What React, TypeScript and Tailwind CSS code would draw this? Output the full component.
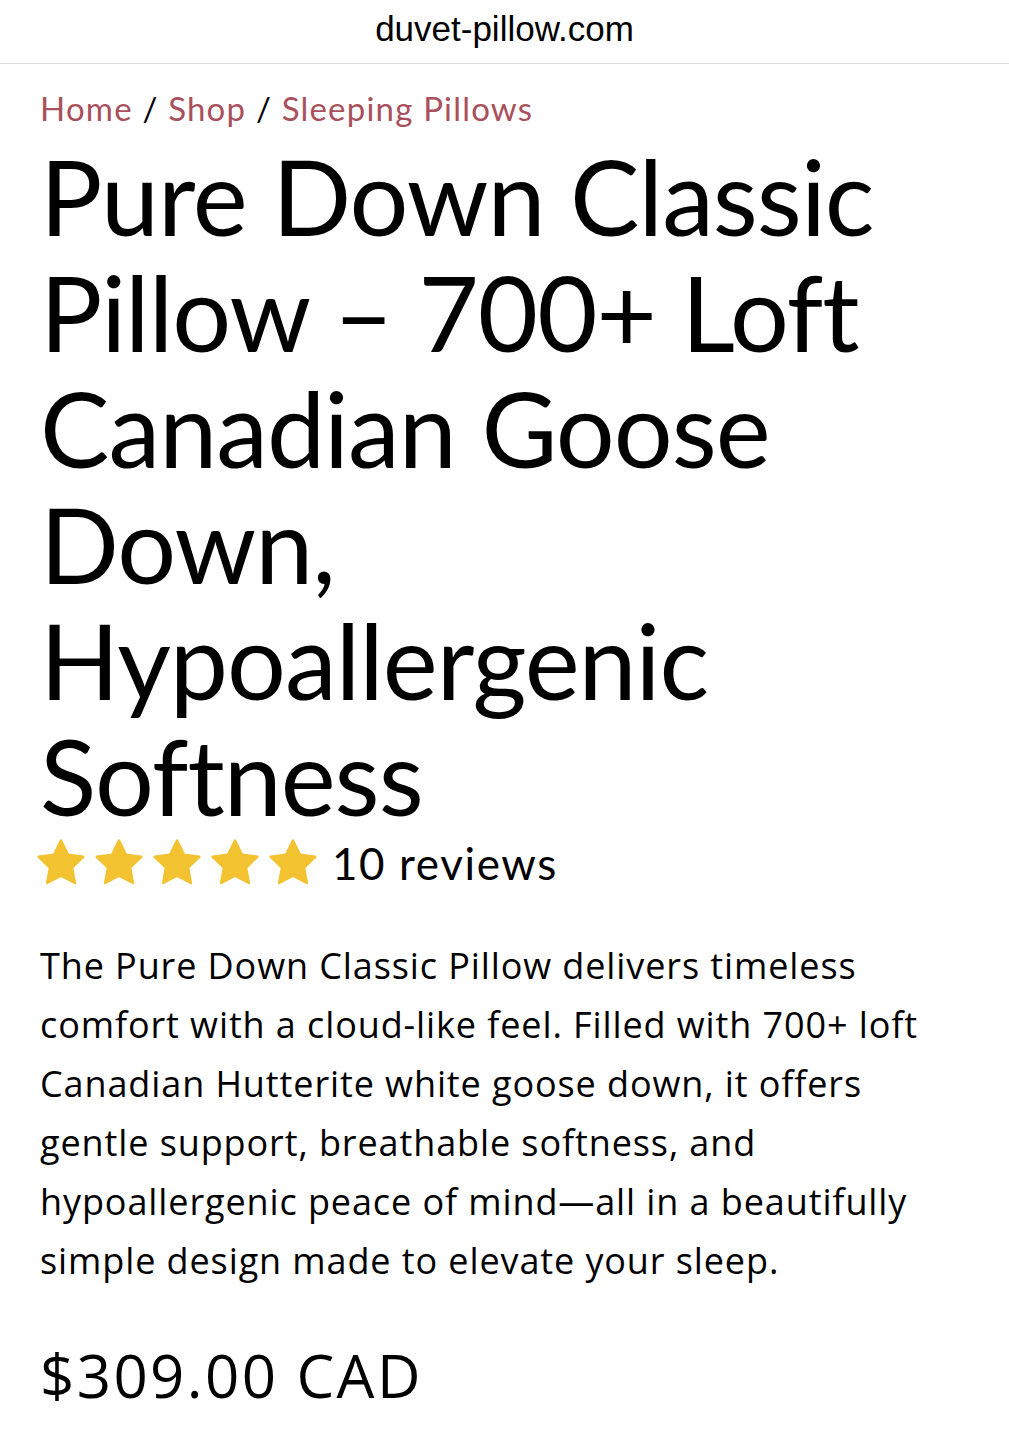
import React from 'react';

const Star: React.FC = () => (
  <svg viewBox="0 0 24 24" className="w-[50px] h-[50px]" fill="#f3c230">
    <path
      d="M12 1.2l3.3 6.8 7.4 1-5.4 5.2 1.35 7.4L12 18.1 5.35 21.6 6.7 14.2 1.3 9l7.4-1z"
      stroke="#f3c230"
      strokeWidth="1.2"
      strokeLinejoin="round"
    />
  </svg>
);

export default function App() {
  return (
    <div className="min-h-screen bg-white text-black" style={{ fontFamily: 'Lato, "Noto Sans", sans-serif' }}>
      {/* address bar */}
      <div className="h-[64px] flex items-center justify-center border-b border-[#dcdcdc]">
        <span className="text-[35px] text-black -mt-[4px]" style={{ fontFamily: '"Liberation Sans", Arial, sans-serif' }}>
          duvet-pillow.com
        </span>
      </div>

      <div className="px-[40px]">
        {/* breadcrumb */}
        <nav className="pt-[22px] text-[33px] leading-[44px] tracking-[1.2px] text-[#a8505c]">
          <span>Home</span>
          <span className="text-black"> / </span>
          <span>Shop</span>
          <span className="text-black"> / </span>
          <span>Sleeping Pillows</span>
        </nav>

        <h1 className="mt-[8px] text-[104px] leading-[116px] tracking-[-1px] font-normal">
          Pure Down Classic Pillow – 700+ Loft Canadian Goose Down, Hypoallergenic Softness
        </h1>

        {/* rating */}
        <div className="flex items-center mt-[1px] -ml-[4px]">
          <div className="flex gap-[8px]">
            <Star />
            <Star />
            <Star />
            <Star />
            <Star />
          </div>
          <span className="ml-[14px] text-[44px] leading-[56px] tracking-[1.6px]">10 reviews</span>
        </div>

        <p
          className="mt-[45px] text-[36px] leading-[59px] tracking-[0.9px] whitespace-nowrap"
          style={{ fontFamily: '"Open Sans", Lato, sans-serif' }}
        >
          The Pure Down Classic Pillow delivers timeless
          <br />
          comfort with a cloud-like feel. Filled with 700+ loft
          <br />
          Canadian Hutterite white goose down, it offers
          <br />
          gentle support, breathable softness, and
          <br />
          hypoallergenic peace of mind—all in a beautifully
          <br />
          simple design made to elevate your sleep.
        </p>

        <div
          className="mt-[50px] text-[60px] leading-[70px] tracking-[2.4px]"
          style={{ fontFamily: '"Open Sans", Lato, sans-serif' }}
        >
          $309.00 CAD
        </div>
      </div>
    </div>
  );
}
